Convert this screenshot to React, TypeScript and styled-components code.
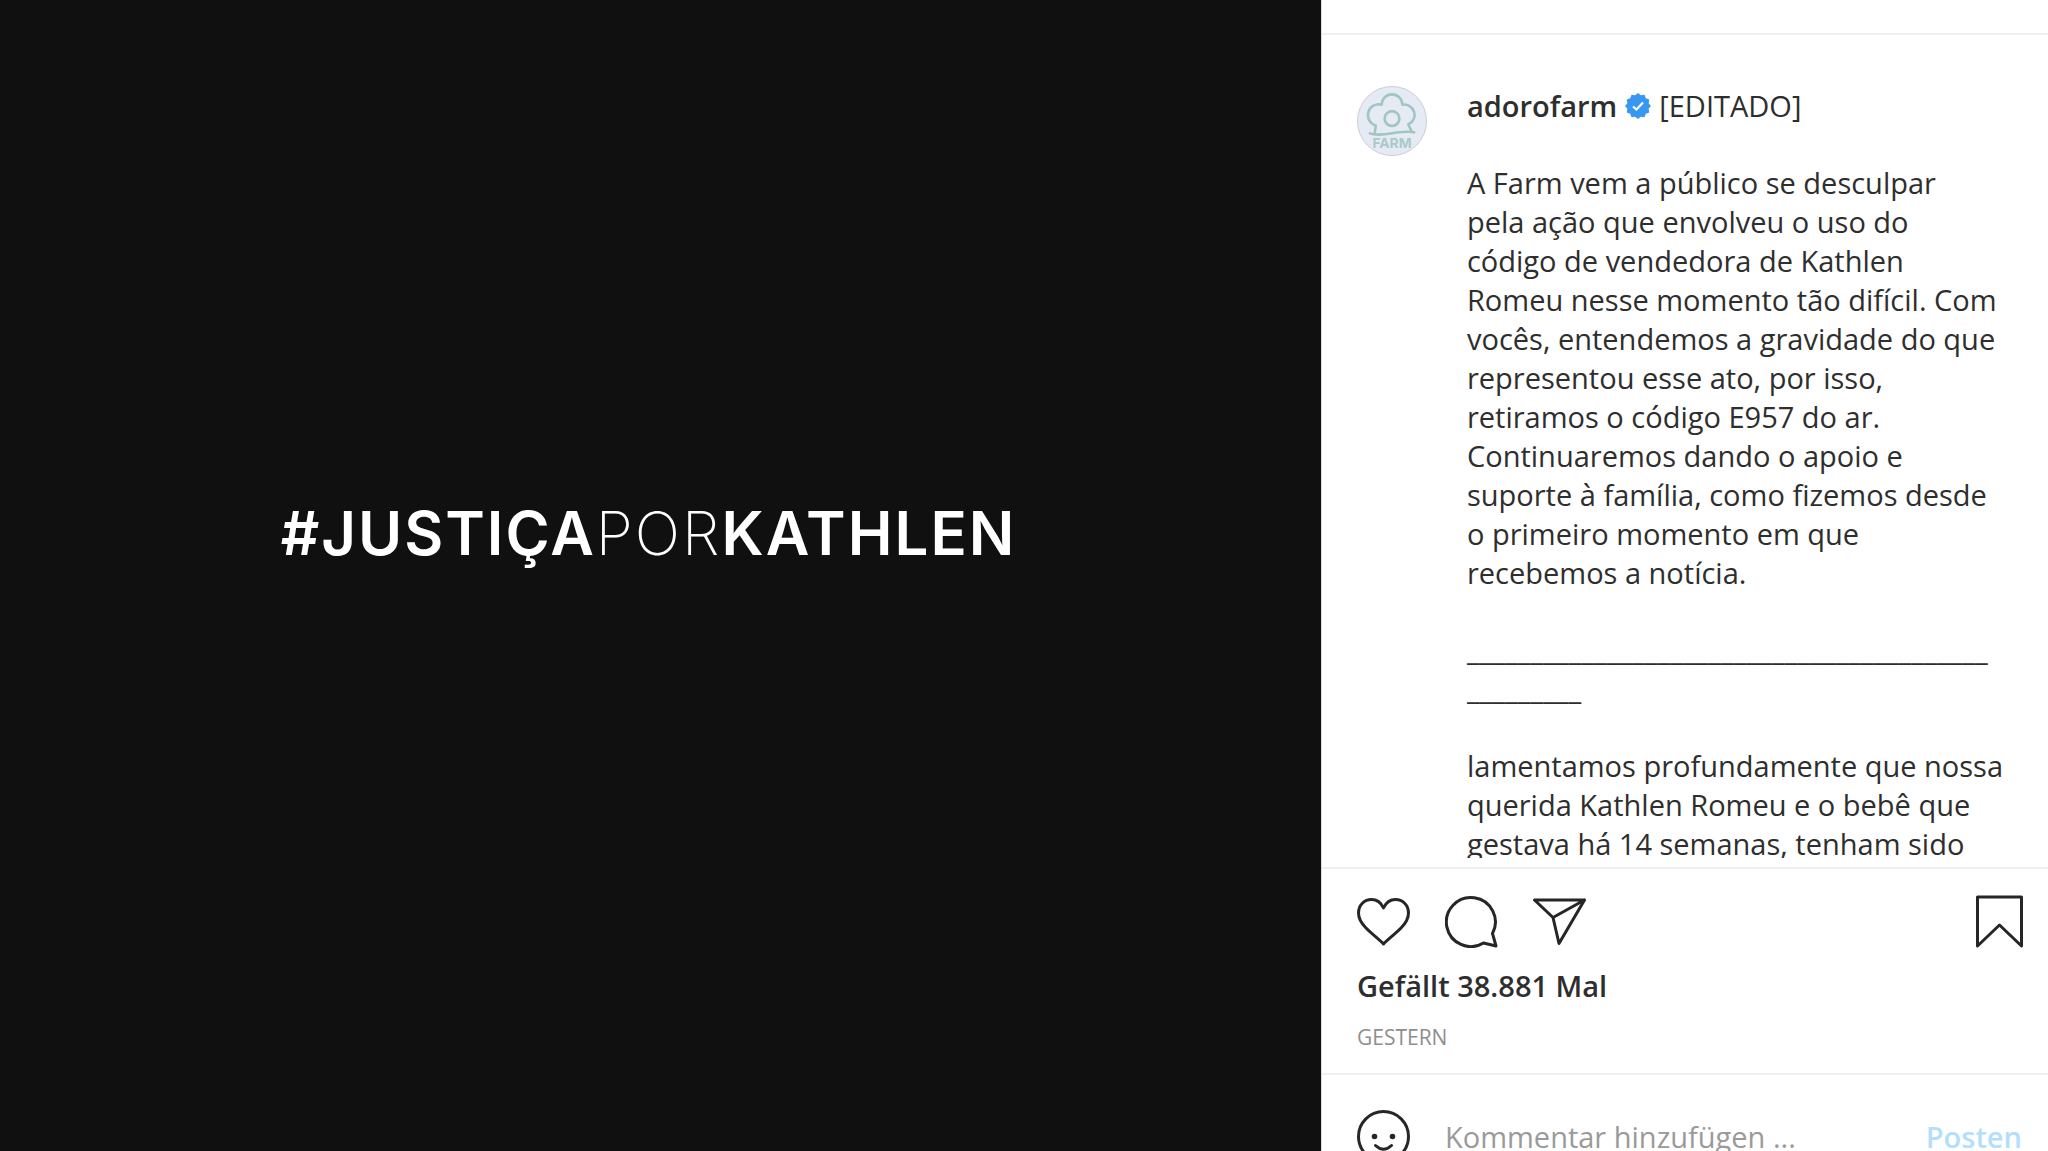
import React from "react";
import styled, { createGlobalStyle } from "styled-components";

const GlobalStyle = createGlobalStyle`
  *, *::before, *::after { box-sizing: border-box; }
  body {
    margin: 0;
    background: #fff;
    color: #2e2e2e;
    font-family: "Open Sans", "Noto Sans", sans-serif;
    font-size: 29px;
    line-height: 39px;
  }
  button { border: 0; padding: 0; background: none; font: inherit; color: inherit; cursor: pointer; }
`;

const Viewport = styled.main`
  height: 100vh;
  overflow: hidden;
`;

const Post = styled.article`
  display: flex;
  height: calc(100vh + 47px);
`;

const Media = styled.div`
  flex: 0 0 64.5%;
  display: flex;
  align-items: center;
  justify-content: center;
  padding: 0 24px 132px 0;
  background: #101010;
`;

const Slogan = styled.h1`
  margin: 0;
  color: #fff;
  font-family: Inter, "Open Sans", sans-serif;
  font-size: 60px;
  font-weight: 600;
  line-height: 72px;
  letter-spacing: 2px;
  white-space: nowrap;
`;

const Thin = styled.span`
  font-weight: 200;
`;

const Side = styled.section`
  flex: 1;
  min-width: 0;
  display: flex;
  flex-direction: column;
  border-left: 1px solid #dbdbdb;
`;

const Header = styled.header`
  flex: none;
  height: 35px;
  border-bottom: 2px solid #efefef;
`;

const Comments = styled.div`
  flex: 1;
  min-height: 0;
  overflow: hidden;
  display: flex;
  align-items: flex-start;
  gap: 40px;
  margin-bottom: 9px;
  padding: 51px 24px 0 35px;
`;

const Avatar = styled.a`
  flex: none;
  display: block;
  width: 70px;
  height: 70px;
  svg { display: block; width: 100%; height: 100%; }
`;

const Caption = styled.div`
  flex: 1;
  min-width: 0;
`;

const Byline = styled.div`
  display: flex;
  align-items: center;
  gap: 8px;
  white-space: nowrap;
  svg { width: 26px; height: 26px; }
`;

const UserName = styled.a`
  color: inherit;
  font-weight: 600;
  text-decoration: none;
`;

const Paragraph = styled.p`
  margin: 38px 0 0;
  white-space: pre;
`;

const Footer = styled.footer`
  flex: none;
  border-top: 2px solid #efefef;
`;

const Actions = styled.div`
  display: flex;
  gap: 35px;
  padding: 26px 22px 0 35px;
`;

const IconButton = styled.button<{ $end?: boolean }>`
  flex: none;
  margin-left: ${(p) => (p.$end ? "auto" : "0")};
  svg { display: block; width: 53px; height: 53px; }
`;

const Likes = styled.div`
  padding: 18px 35px 0;
  font-weight: 600;
`;

const Posted = styled.time`
  display: block;
  padding: 16px 35px 20px;
  color: #8e8e8e;
  font-size: 21px;
  line-height: 32px;
`;

const CommentForm = styled.form`
  display: flex;
  align-items: center;
  gap: 35px;
  height: 125px;
  padding: 0 26px 0 35px;
  border-top: 2px solid #efefef;
`;

const CommentInput = styled.input`
  flex: 1;
  min-width: 0;
  border: 0;
  padding: 0;
  outline: 0;
  background: none;
  color: inherit;
  font: inherit;
  &::placeholder { color: #9a9a9a; opacity: 1; }
`;

const SubmitButton = styled.button`
  color: #b2dffc;
  font-weight: 600;
`;

const FarmLogo = () => (
  <svg viewBox="0 0 71 71" aria-hidden="true">
    <circle cx="35.500" cy="35.500" r="35" fill="#e6eaf5" stroke="#c9cbd8" />
    <g fill="none" stroke="#9fc6bf" strokeWidth="2.600" strokeLinecap="round" strokeLinejoin="round">
      <path d="M18 48 L19 40 A10.500 10.500 0 0 1 25 19 A10.500 10.500 0 0 1 46 19 A10.500 10.500 0 0 1 52 39 L55 45" />
      <circle cx="35.500" cy="33" r="7.500" />
      <path d="M13 48 C25 53 43 44 58 47" />
    </g>
    <text x="35.500" y="63" textAnchor="middle" fontFamily="Inter, sans-serif" fontWeight="700" fontSize="14" fill="#a9cbc7">FARM</text>
  </svg>
);

const badgePoints = Array.from({ length: 24 }, (_, i) => {
  const r = i % 2 ? 11 : 13;
  const a = (i * Math.PI) / 12 - Math.PI / 2;
  return `${(13 + r * Math.cos(a)).toFixed(2)},${(13 + r * Math.sin(a)).toFixed(2)}`;
}).join(" ");

const Verified = () => (
  <svg viewBox="0 0 26 26" role="img" aria-label="Verifiziert">
    <polygon points={badgePoints} fill="#3897f0" />
    <path d="M8 13.500 L11.500 16.500 L18 9.500" fill="none" stroke="#fff" strokeWidth="2.200" />
  </svg>
);

const Icon = ({ children }: { children: React.ReactNode }) => (
  <svg viewBox="0 0 53 53" fill="none" stroke="#262626" strokeWidth="3" strokeLinejoin="round" strokeLinecap="round" aria-hidden="true">
    {children}
  </svg>
);

export default function App() {
  return (
    <>
      <GlobalStyle />
      <Viewport>
        <Post>
          <Media>
            <Slogan>#JUSTIÇA<Thin>POR</Thin>KATHLEN</Slogan>
          </Media>
          <Side>
            <Header />
            <Comments>
              <Avatar href="#" aria-label="adorofarm"><FarmLogo /></Avatar>
              <Caption>
                <Byline>
                  <UserName href="#">adorofarm</UserName>
                  <Verified />
                  <span>[EDITADO]</span>
                </Byline>
                <Paragraph>{`A Farm vem a público se desculpar
pela ação que envolveu o uso do
código de vendedora de Kathlen
Romeu nesse momento tão difícil. Com
vocês, entendemos a gravidade do que
representou esse ato, por isso,
retiramos o código E957 do ar.
Continuaremos dando o apoio e
suporte à família, como fizemos desde
o primeiro momento em que
recebemos a notícia.`}</Paragraph>
                <Paragraph>{`_________________________________________
_________`}</Paragraph>
                <Paragraph>{`lamentamos profundamente que nossa
querida Kathlen Romeu e o bebê que
gestava há 14 semanas, tenham sido`}</Paragraph>
              </Caption>
            </Comments>
            <Footer>
              <Actions>
                <IconButton type="button" aria-label="Gefällt mir">
                  <Icon><path d="M26.500 49 C23 45 16 40 9 33 C4 28 1.500 24 1.500 18 C1.500 10 7.500 4.500 14.500 4.500 C20 4.500 24 7.500 26.500 13 C29 7.500 33 4.500 38.500 4.500 C45.500 4.500 51.500 10 51.500 18 C51.500 24 49 28 44 33 C37 40 30 45 26.500 49 Z" /></Icon>
                </IconButton>
                <IconButton type="button" aria-label="Kommentieren">
                  <Icon><path d="M47.500 38.500 A24.500 24.500 0 1 0 38.500 48 L51 51 Z" /></Icon>
                </IconButton>
                <IconButton type="button" aria-label="Teilen">
                  <Icon><path d="M1.500 5 H51.500 L26 48.500 L20 22.500 Z M20 22.500 L51.500 5" /></Icon>
                </IconButton>
                <IconButton type="button" aria-label="Speichern" $end>
                  <Icon><path d="M4.500 2 H48.500 V51 L26.500 30 L4.500 51 Z" /></Icon>
                </IconButton>
              </Actions>
              <Likes>Gefällt 38.881 Mal</Likes>
              <Posted>GESTERN</Posted>
              <CommentForm onSubmit={(e) => e.preventDefault()}>
                <IconButton type="button" aria-label="Emoji">
                  <Icon>
                    <circle cx="26.500" cy="26.500" r="25" />
                    <circle cx="17.500" cy="26.500" r="1.800" fill="#262626" strokeWidth="2" />
                    <circle cx="35.500" cy="26.500" r="1.800" fill="#262626" strokeWidth="2" />
                    <path d="M18.500 35.500 Q26.500 43 34.500 35.500" />
                  </Icon>
                </IconButton>
                <CommentInput aria-label="Kommentar hinzufügen" placeholder="Kommentar hinzufügen ..." />
                <SubmitButton type="submit">Posten</SubmitButton>
              </CommentForm>
            </Footer>
          </Side>
        </Post>
      </Viewport>
    </>
  );
}
